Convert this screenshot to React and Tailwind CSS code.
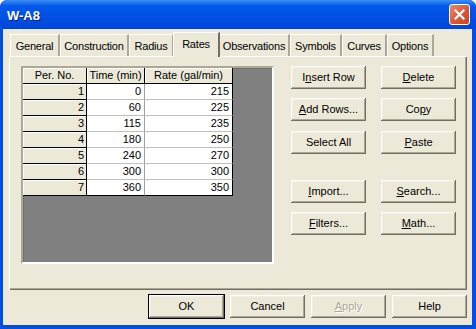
import React from "react";

const tabs = [
  { label: "General", w: "w-[50px]" },
  { label: "Construction", w: "w-[69px]" },
  { label: "Radius", w: "w-[45px]" },
  { label: "Rates", w: "w-[47px]", active: true },
  { label: "Observations", w: "w-[71px]" },
  { label: "Symbols", w: "w-[52px]" },
  { label: "Curves", w: "w-[45px]" },
  { label: "Options", w: "w-[47px]" },
];

const rows = [
  [1, 0, 215],
  [2, 60, 225],
  [3, 115, 235],
  [4, 180, 250],
  [5, 240, 270],
  [6, 300, 300],
  [7, 360, 350],
];

const raised =
  "bg-[#ECE9D8] shadow-[inset_-1px_-1px_0_#716F64,inset_1px_1px_0_#FFFFFF,inset_-2px_-2px_0_#ACA899,inset_2px_2px_0_#F1EFE2]";

// Classic 3D push button
const Btn = ({ children, isDefault, className = "" }) => (
  <div
    className={`h-[23px] w-[75px] flex items-center justify-center text-black ${raised} ${
      isDefault ? "outline outline-1 outline-black" : ""
    } ${className}`}
  >
    {children}
  </div>
);

const U = ({ children }) => <span className="underline underline-offset-[1px]">{children}</span>;

const App = () => {
  return (
    <div
      className="w-[476px] h-[329px] flex flex-col bg-[#0050E6] rounded-t-[7px] overflow-hidden text-[11px] leading-none"
      style={{ fontFamily: '"Liberation Sans", Arial, sans-serif' }}
    >
      {/* Title bar */}
      <div className="h-[29px] flex items-center justify-between pl-[7px] pr-[6px] bg-linear-to-b from-[#3C8EF7] via-[#0259EC] via-20% to-[#0046D8]">
        <span className="text-white font-bold text-[13px] mt-[2px] [text-shadow:1px_1px_0_#0a1e8c]">W-A8</span>
        <div className="w-[21px] h-[21px] rounded-[3px] border border-white bg-linear-to-br from-[#E98A6C] via-[#E05A38] to-[#C4411F] flex items-center justify-center">
          <svg width="11" height="11" viewBox="0 0 11 11">
            <path d="M1.5 1.5 L9.5 9.5 M9.5 1.5 L1.5 9.5" stroke="white" strokeWidth="2.2" strokeLinecap="square" />
          </svg>
        </div>
      </div>

      {/* Dialog body */}
      <div className="flex-1 ml-[3px] mr-[4px] mb-[4px] bg-[#ECE9D8] flex flex-col pl-[6px] pt-[3px]">
        {/* Tabs */}
        <div className="flex items-end h-[24px] ml-[1px] tracking-[-0.2px]">
          {tabs.map((t) =>
            t.active ? (
              <div
                key={t.label}
                className={`${t.w} h-[25px] -mb-[1px] z-10 bg-[#ECE9D8] border-t border-l border-white border-r-2 border-r-[#716F64] flex items-start justify-center pt-[6px] -mx-[1px]`}
              >
                {t.label}
              </div>
            ) : (
              <div
                key={t.label}
                className={`${t.w} h-[22px] bg-[#ECE9D8] border-t border-l border-white border-r-2 border-r-[#ACA899] flex items-center justify-center pt-[2px]`}
              >
                {t.label}
              </div>
            )
          )}
        </div>

        {/* Tab panel */}
        <div className="w-[458px] h-[234px] border-t border-l border-white shadow-[inset_-1px_-1px_0_#716F64,inset_-2px_-2px_0_#ACA899] flex pt-[9px] pl-[11px]">
          {/* Grid area */}
          <div className="w-[253px] h-[198px] bg-[#808080] border-2 border-t-[#ACA899] border-l-[#ACA899] border-b-white border-r-white shadow-[inset_1px_1px_0_#716F64]">
            <div className="grid grid-cols-[64px_58px_88px] w-fit">
              {["Per. No.", "Time (min)", "Rate (gal/min)"].map((h) => (
                <div
                  key={h}
                  className="h-[16px] bg-[#ECE9D8] border-r border-b border-black shadow-[inset_1px_1px_0_#fff] flex items-center justify-center"
                >
                  {h}
                </div>
              ))}
              {rows.map(([n, t, r], i) => (
                <React.Fragment key={n}>
                  <div className="h-[16px] bg-[#ECE9D8] border-r border-b border-black shadow-[inset_1px_1px_0_#fff] flex items-center justify-end pr-[2px]">
                    {n}
                  </div>
                  <div
                    className={`h-[16px] bg-white border-r border-[#A0A0A0] border-b flex items-center justify-end pr-[3px] ${
                      i === rows.length - 1 ? "border-b-black" : "border-b-[#C0C0C0]"
                    }`}
                  >
                    {t}
                  </div>
                  <div
                    className={`h-[16px] bg-white border-r border-r-black border-b flex items-center justify-end pr-[3px] ${
                      i === rows.length - 1 ? "border-b-black" : "border-b-[#C0C0C0]"
                    }`}
                  >
                    {r}
                  </div>
                </React.Fragment>
              ))}
            </div>
          </div>

          {/* Side buttons */}
          <div className="ml-[17px] grid grid-cols-[75px_75px] gap-x-[15px] content-start">
            <Btn>
              I<U>n</U>sert Row
            </Btn>
            <Btn>
              <U>D</U>elete
            </Btn>
            <Btn className="mt-[9px]">
              <U>A</U>dd Rows...
            </Btn>
            <Btn className="mt-[9px]">
              Co<U>p</U>y
            </Btn>
            <Btn className="mt-[10px]">Select All</Btn>
            <Btn className="mt-[10px]">
              <U>P</U>aste
            </Btn>
            <Btn className="mt-[26px]">
              <U>I</U>mport...
            </Btn>
            <Btn className="mt-[26px]">
              <U>S</U>earch...
            </Btn>
            <Btn className="mt-[9px]">
              <U>F</U>ilters...
            </Btn>
            <Btn className="mt-[9px]">
              <U>M</U>ath...
            </Btn>
          </div>
        </div>

        {/* Dialog buttons */}
        <div className="w-[458px] flex justify-end gap-[6px] mt-[5px]">
          <Btn isDefault>OK</Btn>
          <Btn>Cancel</Btn>
          <Btn>
            <span className="text-[#ACA899] [text-shadow:1px_1px_0_#fff]">
              <U>A</U>pply
            </span>
          </Btn>
          <Btn>Help</Btn>
        </div>
      </div>
    </div>
  );
};

export default App;
